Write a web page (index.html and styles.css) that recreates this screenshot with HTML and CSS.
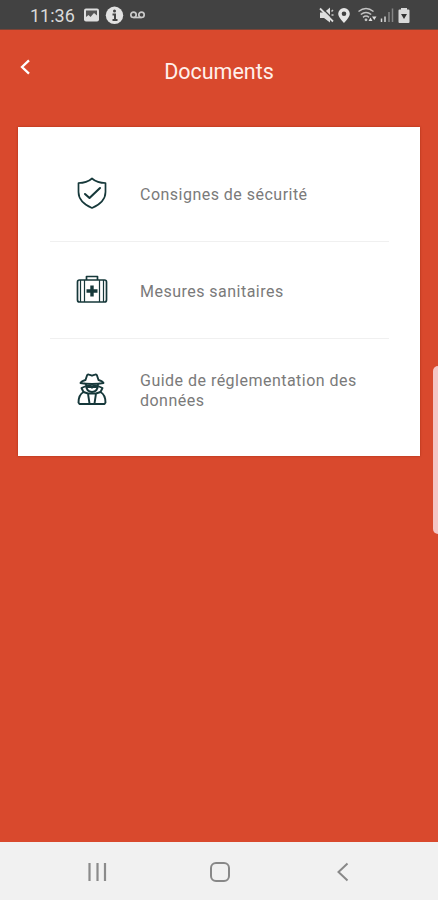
FILE: index.html
```html
<!DOCTYPE html>
<html lang="fr">
<head>
	<meta charset="UTF-8">
	<meta name="viewport" content="width=device-width, initial-scale=1.0">
	<link rel="stylesheet" href="styles.css">
	<title>Documents</title>
</head>
<body>

<div class="screen">

	<div class="status_bar">
		<span class="time">11:36</span>
		<svg class="status_left" width="64" height="20" viewBox="0 0 64 20">
			<rect x="0" y="2.5" width="15" height="13" rx="2" fill="#dedede"/>
			<path d="M2 4.5h11v5l-3-2.500-3.500 4L4.500 9 2 11z" fill="#555"/>
			<path d="M2.500 13.500l2.500-3 2 2 3-3.500 3 4.500z" fill="#dedede"/>
			<circle cx="30.500" cy="9.300" r="8.700" fill="#e2e2e2"/>
			<circle cx="30.500" cy="5" r="1.500" fill="#444"/>
			<path d="M28.500 8.500h2.500v5M28.500 14h5" fill="none" stroke="#444" stroke-width="2"/>
			<g fill="none" stroke="#c9c9c9" stroke-width="1.700">
				<circle cx="49.500" cy="8.800" r="2.700"/>
				<circle cx="57.500" cy="8.800" r="2.700"/>
				<path d="M49.500 11.500h8"/>
			</g>
		</svg>
		<svg class="status_right" width="92" height="20" viewBox="0 0 92 20">
			<path d="M1 6.500h4l6-5v15l-6-4.500H1z" fill="#dedede"/>
			<path d="M2.500 1.500l13 13" stroke="#424242" stroke-width="1.500"/>
			<path d="M1 2.500l13 13" stroke="#dedede" stroke-width="1.800"/>
			<path d="M12.500 5.500l1.500-1.500M12.500 9h2" stroke="#c9c9c9" stroke-width="1.500"/>
			<path d="M25 2a5.800 5.800 0 0 0-5.800 5.800c0 3.800 5.800 9.200 5.800 9.200s5.800-5.400 5.800-9.200A5.800 5.800 0 0 0 25 2zm0 3.500a2.300 2.300 0 1 1 0 4.600 2.300 2.300 0 0 1 0-4.600z" fill="#e6e6e6"/>
			<g fill="none" stroke="#c4c4c4" stroke-width="1.500">
				<path d="M39.500 5.500q7.500-6 15 0M41.800 8.500q5.200-4.200 10.400 0M44 11.300q3-2.500 6 0"/>
			</g>
			<circle cx="47" cy="13.800" r="1.400" fill="#c4c4c4"/>
			<path d="M49.500 15l2-3.500 2 3.500zM53 10.500h4.500l-2.200 3.500z" fill="#dedede"/>
			<path d="M62.500 12.500v3.500M66 10.500v5.500" stroke="#d6d6d6" stroke-width="1.500"/>
			<path d="M70 6v10M73.500 2.500v13.500" stroke="#858585" stroke-width="1.500"/>
			<path d="M82 2h6v1.500h1.500q1 0 1 1V16q0 1-1 1h-9q-1 0-1-1V4.500q0-1 1-1H82z" fill="#d9d9d9"/>
			<path d="M82 8h6L85 13z" fill="#333"/>
		</svg>
	</div><!-- end of status_bar -->

	<div class="header">
		<a class="back">
			<svg width="12" height="18" viewBox="0 0 12 18">
				<path d="M10 2.300L3 9l7 6.700" fill="none" stroke="#fff" stroke-width="2.300"/>
			</svg>
		</a>
		<h1>Documents</h1>
	</div>

	<ul class="doc_list">

		<li>
			<svg class="icon" width="32" height="34" viewBox="0 0 32 34">
				<g fill="none" stroke="#16383a" stroke-width="1.700" stroke-linejoin="round" stroke-linecap="round">
					<path d="M16 2.500c-3.500 3-8 4.500-13.500 4.500v9c0 7.500 5.500 12.500 13.500 16 8-3.500 13.500-8.500 13.500-16V7C24 7 19.500 5.500 16 2.500z"/>
					<path d="M9 18l4.500 4L24 12" stroke-width="2.100"/>
				</g>
			</svg>
			<span class="label">Consignes de sécurité</span>
		</li>

		<li>
			<svg class="icon" width="32" height="34" viewBox="0 0 32 34">
				<g fill="none" stroke="#16383a" stroke-width="1.700" stroke-linejoin="round">
					<rect x="1.500" y="7" width="29" height="22" rx="2"/>
					<path d="M10.500 7V3.500h11V7"/>
					<path d="M4.500 7v22M8.500 7v22M23.500 7v22M27.500 7v22" stroke-width="1.200"/>
				</g>
				<path d="M16 12.500v11M10.500 18h11" stroke="#16383a" stroke-width="3.400"/>
			</svg>
			<span class="label">Mesures sanitaires</span>
		</li>

		<li>
			<svg class="icon" width="32" height="34" viewBox="0 0 32 34">
				<g fill="none" stroke="#16383a" stroke-width="1.900" stroke-linejoin="round" stroke-linecap="round">
					<path d="M9.500 8l1.500-4.500q.5-1.500 2-.8l3 1 3-1q1.500-.7 2 .8L22.500 8q4 1 5 3-5 1-11.500 1T4.500 11q1-2 5-3z"/>
					<path d="M10 12.500q0 7 6 7.500 6-.5 6-7.500"/>
					<path d="M11.500 14.500h3.500l1 .7 1-.7h3.500" stroke-width="2.800"/>
					<path d="M9 14.500l-3.500 1.500 2 4C4 22 2.500 25 2.500 30.500l1 1.500h25l1-1.500c0-5.500-1.500-8.500-5-10.500l2-4-3.500-1.500"/>
					<path d="M7.500 20l4.500 1.500 1.500 10M24.500 20L20 21.500l-1.500 10M13 21.500h6"/>
				</g>
			</svg>
			<span class="label">Guide de réglementation des données</span>
		</li>

	</ul>

	<div class="edge_handle"></div>

	<div class="nav_bar">
		<svg width="20" height="20" viewBox="0 0 20 20">
			<path d="M2.500 1v18M10.500 1v18M18 1v18" stroke="#8b8b8b" stroke-width="2.200"/>
		</svg>
		<svg width="22" height="22" viewBox="0 0 22 22">
			<rect x="2" y="2" width="18" height="18" rx="5" fill="none" stroke="#888" stroke-width="2"/>
		</svg>
		<svg width="20" height="20" viewBox="0 0 20 20">
			<path d="M14.500 1.500L5.500 10l9 8.500" fill="none" stroke="#888" stroke-width="2"/>
		</svg>
	</div>

</div><!-- end of screen -->

</body>
</html>
```

FILE: styles.css
```css
body{
	margin: 0;
	font-family: Roboto, "Liberation Sans", sans-serif;
}

.screen{
	position: relative;
	display: flex;
	flex-direction: column;
	height: 900px;
	background-color: #d9492d;
	overflow: hidden;
}

.status_bar{
	display: flex;
	box-sizing: border-box;
	height: 30px;
	padding: 6px 27px 0 30px;
	background-color: #424242;
	border-bottom: 1px solid #7b4336;
}

.time{
	width: 54px;
	font-size: 18px;
	line-height: 20px;
	color: #dadada;
}

.status_right{
	margin-left: auto;
}

.header{
	display: grid;
	grid-template-columns: 40px 1fr 40px;
	height: 97px;
}

.back{
	padding: 28px 0 0 19px;
}

.header h1{
	margin: 28px 0 0;
	font-size: 21.5px;
	font-weight: 400;
	line-height: 28px;
	text-align: center;
	color: #fff0eb;
}

.doc_list{
	box-sizing: border-box;
	height: 329px;
	margin: 0 18px;
	padding: 18px 31px 0 32px;
	background-color: #fff;
	box-shadow: 0 0 2px rgba(130, 30, 0, .6);
}

	.doc_list li{
		display: flex;
		align-items: center;
		box-sizing: border-box;
		height: 97px;
		padding: 0 25px 0 26px;
		border-bottom: 1px solid #f0f0f0;
		list-style-type: none;
	}

	.doc_list li:last-child{
		height: 100px;
		border-bottom: none;
	}

.icon{
	flex: none;
	margin-right: 32px;
}

.label{
	padding-top: 4px;
	font-size: 16px;
	line-height: 20px;
	letter-spacing: .48px;
	color: #7a7a7a;
}

.edge_handle{
	position: absolute;
	top: 366px;
	right: -6px;
	width: 11px;
	height: 168px;
	border-radius: 5px;
	background-color: #f4c5c5;
}

.nav_bar{
	display: flex;
	align-items: center;
	justify-content: space-between;
	box-sizing: border-box;
	height: 58px;
	margin-top: auto;
	padding: 2px 85px 0 87px;
	background-color: #f1f1f1;
}
```
